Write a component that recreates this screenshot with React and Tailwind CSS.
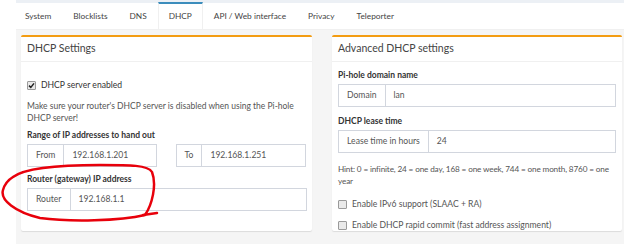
import React from "react";

const tabs = ["System", "Blocklists", "DNS", "DHCP", "API / Web interface", "Privacy", "Teleporter"];

function Check({ checked }) {
  return (
    <span className="flex h-[9px] w-[9px] shrink-0 items-center justify-center rounded-[1px] border border-[#9a9a9a] bg-[#e9e9e9]">
      {checked && (
        <svg width="7" height="7" viewBox="0 0 7 7">
          <path d="M1 3.6 L2.8 5.4 L6 1.4" fill="none" stroke="#222" strokeWidth="1.5" />
        </svg>
      )}
    </span>
  );
}

function Field({ addon, value, className = "" }) {
  return (
    <div className={"flex h-[23px] border border-[#d2d6de] bg-white text-[8.6px] text-[#555] " + className}>
      <span className="flex items-center border-r border-[#d2d6de] px-[8px]">{addon}</span>
      <span className="flex items-center px-[8px]">{value}</span>
    </div>
  );
}

function Box({ title, className = "", children }) {
  return (
    <div className={"rounded-[2px] border-t-2 border-[#f39c12] bg-white shadow-[0_1px_1px_rgba(0,0,0,0.1)] " + className}>
      <div className="flex h-[25px] items-center border-b border-[#f0f0f0] px-[6px] text-[10.5px] text-[#444]">
        {title}
      </div>
      <div className="px-[6px]">{children}</div>
    </div>
  );
}

export default function App() {
  return (
    <div className="relative h-[244px] w-[624px] overflow-hidden bg-white font-['Lato',sans-serif]">
      <div className="ml-4 flex h-full flex-col bg-[#f5f5f5]">
        <div className="h-[3px] bg-[#ecf0f5]" />
        <div className="flex h-[27px] border-b border-[#f0f0f0] bg-white text-[8.3px] text-[#444]">
          <div className="-ml-[2px] flex">
            {tabs.map((t) =>
              t === "DHCP" ? (
                <span
                  key={t}
                  className="-mt-[1px] flex items-center border-x border-t-2 border-x-[#f0f0f0] border-t-[#3c8dbc] bg-white px-[10px]"
                >
                  {t}
                </span>
              ) : (
                <span key={t} className="flex items-center px-[11px]">
                  {t}
                </span>
              )
            )}
          </div>
        </div>

        <div className="flex gap-[20px] pl-[5px] pt-[5px]">
          <Box title="DHCP Settings" className="w-[291px]">
            <div className="mt-[17px] flex h-[12px] items-center gap-[5px] text-[8.6px] text-[#333]">
              <Check checked />
              <span>DHCP server enabled</span>
            </div>
            <p className="mt-[9px] text-[8.5px] leading-[12px] text-[#555]">
              Make sure your router's DHCP server is disabled when using the Pi-hole DHCP server!
            </p>
            <div className="mt-[5px] text-[8.5px] font-bold leading-[12px] text-[#333]">
              Range of IP addresses to hand out
            </div>
            <div className="mt-[3px] flex gap-[19px]">
              <Field addon="From" value="192.168.1.201" className="w-[130px]" />
              <Field addon="To" value="192.168.1.251" className="w-[131px]" />
            </div>
            <div className="mt-[6px] text-[8.5px] font-bold leading-[12px] text-[#333]">
              Router (gateway) IP address
            </div>
            <Field addon="Router" value="192.168.1.1" className="mb-[14px] mt-[3px] w-[280px]" />
          </Box>

          <Box title="Advanced DHCP settings" className="w-[290px]">
            <div className="mt-[7px] text-[8.5px] font-bold leading-[12px] text-[#333]">
              Pi-hole domain name
            </div>
            <Field addon="Domain" value="lan" className="mt-[3px] w-[278px]" />
            <div className="mt-[8px] text-[8.5px] font-bold leading-[12px] text-[#333]">
              DHCP lease time
            </div>
            <Field addon="Lease time in hours" value="24" className="mt-[3px] w-[278px]" />
            <p className="mt-[10px] w-[282px] text-[8.2px] leading-[12px] tracking-[-0.15px] text-[#555]">
              Hint: 0 = infinite, 24 = one day, 168 = one week, 744 = one month, 8760 = one year
            </p>
            <div className="mt-[11px] flex h-[12px] items-center gap-[5px] text-[8.6px] text-[#555]">
              <Check />
              <span>Enable IPv6 support (SLAAC + RA)</span>
            </div>
            <div className="mt-[9px] flex h-[12px] items-center gap-[5px] text-[8.6px] text-[#555]">
              <Check />
              <span>Enable DHCP rapid commit (fast address assignment)</span>
            </div>
          </Box>
        </div>
      </div>

      <svg className="pointer-events-none absolute inset-0" width="624" height="244" viewBox="0 0 624 244">
        <path
          d="M 13 177 C 25 168, 60 165, 100 165 C 130 165, 148 165, 152 172 C 157 185, 152 205, 145 215 C 120 221, 70 222, 40 218 C 15 212, 0 200, 3 190 C 5 183, 8 180, 13 177"
          fill="none"
          stroke="#e8000b"
          strokeWidth="2.5"
          strokeLinecap="round"
        />
        <path d="M 143 215 L 157 213" fill="none" stroke="#e8000b" strokeWidth="2.5" strokeLinecap="round" />
      </svg>
    </div>
  );
}
